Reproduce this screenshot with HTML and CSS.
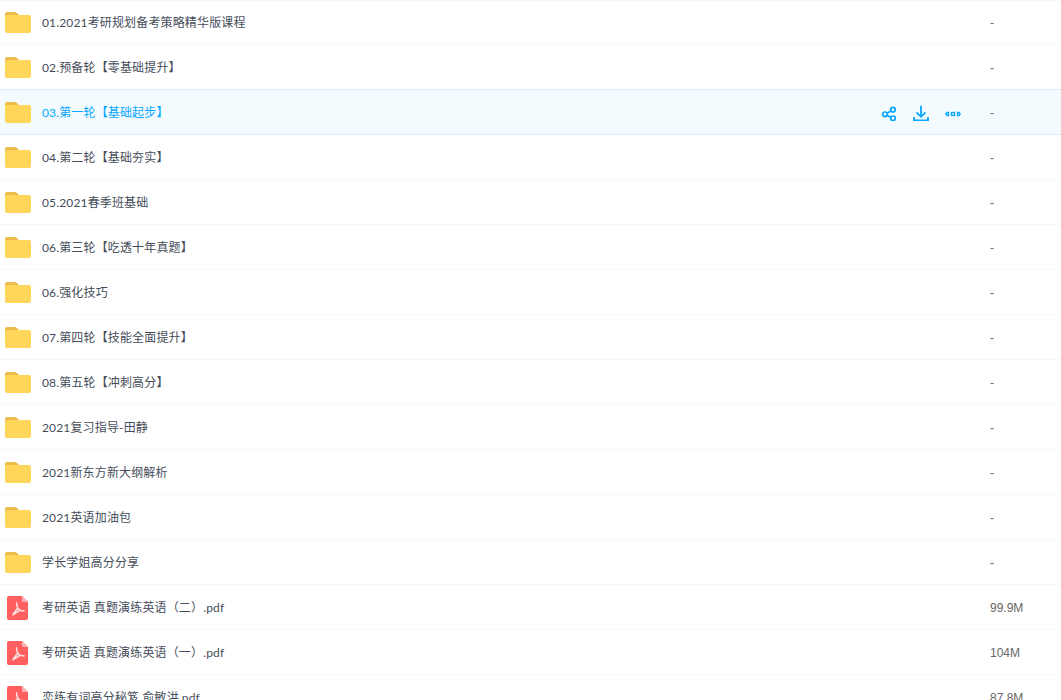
FILE: index.html
```html
<!DOCTYPE html>
<html lang="zh-CN">
  <head>
    <meta charset="UTF-8" />
    <title>文件列表</title>
    <link rel="stylesheet" href="styles.css">
  </head>
  <body>
    <svg class="defs" width="0" height="0">
      <symbol id="folder" viewBox="0 0 26 22">
        <path d="M0 3a2 2 0 0 1 2-2h7q2 0 3 1l2 2v4H0z" fill="#ecbc4b" />
        <rect x="0" y="4" width="26" height="18" rx="2" fill="#ffd659" />
      </symbol>
      <symbol id="pdf" viewBox="0 0 21 24">
        <path d="M2 0h13l6 6v16a2 2 0 0 1-2 2H2a2 2 0 0 1-2-2V2a2 2 0 0 1 2-2z" fill="#ff5f5f" />
        <path d="M15 0l6 6h-5a1 1 0 0 1-1-1z" fill="#ffb3b3" />
        <path d="M10 6.500c-.6 0-.4 3 .8 5.500L6 18.500M10.800 12l1.900 2.300 5 .6M5.500 19l7.200-4.700" fill="none" stroke="#ffe3e3" stroke-width="1.500" />
      </symbol>
    </svg>

    <ul class="list">
      <li class="row">
        <span class="icon"><svg class="folder"><use href="#folder" /></svg></span>
        <span class="name">01.2021考研规划备考策略精华版课程</span>
        <span class="size">-</span>
      </li>
      <li class="row before-active">
        <span class="icon"><svg class="folder"><use href="#folder" /></svg></span>
        <span class="name">02.预备轮【零基础提升】</span>
        <span class="size">-</span>
      </li>
      <li class="row active">
        <span class="icon"><svg class="folder"><use href="#folder" /></svg></span>
        <span class="name">03.第一轮【基础起步】</span>
        <span class="tools">
          <svg class="tool" viewBox="0 0 16 16" fill="none" stroke="#06a7ff" stroke-width="1.700">
            <circle cx="4" cy="9.300" r="2.300" />
            <circle cx="12" cy="4.700" r="2.300" />
            <circle cx="12" cy="13.300" r="2.300" />
            <path d="M6 8.200l4-2.300M6 10.400l4 1.900" />
          </svg>
          <svg class="tool" viewBox="0 0 16 16" fill="none" stroke="#06a7ff" stroke-width="1.800">
            <path d="M8 .7v11M3.500 7.300L8 11.800l4.500-4.500M1 12v3.500h14V12" />
          </svg>
          <svg class="tool" viewBox="0 0 16 16" fill="none" stroke="#06a7ff" stroke-width="1.400">
            <path d="M3.500 7.500H2L.8 9 2 10.500h1.500zM12.500 7.500H14L15.200 9 14 10.500h-1.500z" />
            <rect x="6.500" y="7.500" width="3" height="3" />
          </svg>
        </span>
        <span class="size">-</span>
      </li>
      <li class="row">
        <span class="icon"><svg class="folder"><use href="#folder" /></svg></span>
        <span class="name">04.第二轮【基础夯实】</span>
        <span class="size">-</span>
      </li>
      <li class="row">
        <span class="icon"><svg class="folder"><use href="#folder" /></svg></span>
        <span class="name">05.2021春季班基础</span>
        <span class="size">-</span>
      </li>
      <li class="row">
        <span class="icon"><svg class="folder"><use href="#folder" /></svg></span>
        <span class="name">06.第三轮【吃透十年真题】</span>
        <span class="size">-</span>
      </li>
      <li class="row">
        <span class="icon"><svg class="folder"><use href="#folder" /></svg></span>
        <span class="name">06.强化技巧</span>
        <span class="size">-</span>
      </li>
      <li class="row">
        <span class="icon"><svg class="folder"><use href="#folder" /></svg></span>
        <span class="name">07.第四轮【技能全面提升】</span>
        <span class="size">-</span>
      </li>
      <li class="row">
        <span class="icon"><svg class="folder"><use href="#folder" /></svg></span>
        <span class="name">08.第五轮【冲刺高分】</span>
        <span class="size">-</span>
      </li>
      <li class="row">
        <span class="icon"><svg class="folder"><use href="#folder" /></svg></span>
        <span class="name">2021复习指导-田静</span>
        <span class="size">-</span>
      </li>
      <li class="row">
        <span class="icon"><svg class="folder"><use href="#folder" /></svg></span>
        <span class="name">2021新东方新大纲解析</span>
        <span class="size">-</span>
      </li>
      <li class="row">
        <span class="icon"><svg class="folder"><use href="#folder" /></svg></span>
        <span class="name">2021英语加油包</span>
        <span class="size">-</span>
      </li>
      <li class="row">
        <span class="icon"><svg class="folder"><use href="#folder" /></svg></span>
        <span class="name">学长学姐高分分享</span>
        <span class="size">-</span>
      </li>
      <li class="row">
        <span class="icon"><svg class="pdf"><use href="#pdf" /></svg></span>
        <span class="name">考研英语 真题演练英语（二）.pdf</span>
        <span class="size">99.9M</span>
      </li>
      <li class="row">
        <span class="icon"><svg class="pdf"><use href="#pdf" /></svg></span>
        <span class="name">考研英语 真题演练英语（一）.pdf</span>
        <span class="size">104M</span>
      </li>
      <li class="row">
        <span class="icon"><svg class="pdf"><use href="#pdf" /></svg></span>
        <span class="name">恋练有词高分秘笈 俞敏洪.pdf</span>
        <span class="size">87.8M</span>
      </li>
    </ul>
  </body>
</html>
```

FILE: styles.css
```css
html,
body {
  height: 100%;
  overflow: hidden;
}
body {
  margin: 0;
  background: #fff;
  font-family: "Liberation Sans", "Noto Sans CJK SC", sans-serif;
  font-size: 12px;
  color: #454d5a;
}
.defs {
  display: block;
}
.list {
  list-style: none;
  margin: 0;
  padding: 0;
  border-top: 1px solid #f4f8fd;
}
.row {
  display: flex;
  align-items: center;
  height: 45px;
  box-sizing: border-box;
  border-bottom: 1px solid #f4f8fd;
}
.row:first-child {
  margin-top: -1px;
}
.row.before-active {
  border-bottom-color: #daebfe;
}
.row.active {
  background: #f4fbff;
  border-bottom-color: #daebfe;
  color: #06a7ff;
}
.icon {
  width: 42px;
  flex: none;
  display: flex;
}
.folder {
  width: 26px;
  height: 22px;
  margin-left: 5px;
}
.pdf {
  width: 21px;
  height: 24px;
  margin-left: 7px;
  margin-top: 2px;
}
.name {
  flex: 1;
  white-space: nowrap;
  padding-bottom: 2px;
  letter-spacing: 0.15px;
  font-family: Lato, "Noto Sans CJK SC", sans-serif;
}
.tools {
  display: flex;
  gap: 16px;
  margin-right: 29px;
  padding-top: 2px;
}
.tool {
  width: 16px;
  height: 16px;
}
.size {
  width: 71px;
  flex: none;
  padding-top: 2px;
  color: #666;
}
```
